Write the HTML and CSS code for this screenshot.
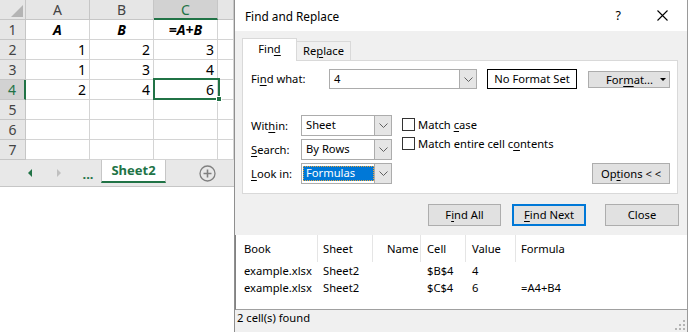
FILE: index.html
```html
<!DOCTYPE html>
<html>
<head>
<meta charset="utf-8">
<link rel="stylesheet" href="styles.css">
</head>
<body>
<div class="app">
  <div class="excel">
    <div class="grid">
      <div class="hd corner"><span class="tri"></span></div>
      <div class="hd">A</div>
      <div class="hd">B</div>
      <div class="hd selcol">C</div>
      <div class="hd"></div>

      <div class="hd">1</div><div class="cell ctr bi">A</div><div class="cell ctr bi">B</div><div class="cell ctr bi">=A+B</div><div class="cell"></div>
      <div class="hd">2</div><div class="cell num">1</div><div class="cell num">2</div><div class="cell num">3</div><div class="cell"></div>
      <div class="hd">3</div><div class="cell num">1</div><div class="cell num">3</div><div class="cell num">4</div><div class="cell"></div>
      <div class="hd selrow">4</div><div class="cell num">2</div><div class="cell num">4</div><div class="cell num">6</div><div class="cell"></div>
      <div class="hd">5</div><div class="cell"></div><div class="cell"></div><div class="cell"></div><div class="cell"></div>
      <div class="hd">6</div><div class="cell"></div><div class="cell"></div><div class="cell"></div><div class="cell"></div>
      <div class="hd">7</div><div class="cell"></div><div class="cell"></div><div class="cell"></div><div class="cell"></div>

      <div class="selbox"><span class="handle"></span></div>
    </div>
    <div class="tabbar">
      <span class="navl"></span>
      <span class="navr"></span>
      <span class="dots">...</span>
      <div class="stab">Sheet2</div>
      <svg class="plus" width="17" height="17" viewBox="0 0 17 17"><circle cx="8.5" cy="8.5" r="7.5" fill="none" stroke="#808080" stroke-width="1.3"/><path d="M8.5 4.5V12.5M4.5 8.5H12.5" stroke="#808080" stroke-width="1.6"/></svg>
    </div>
  </div>

  <div class="dlg">
    <div class="titlebar">
      <span class="ttl">Find and Replace</span>
      <span class="help">?</span>
      <svg class="xbtn" width="11" height="11" viewBox="0 0 11 11"><path d="M0.5 0.5L10.5 10.5M10.5 0.5L0.5 10.5" stroke="#000" stroke-width="1.1"/></svg>
    </div>
    <div class="tabs">
      <div class="tab active">Fin<u>d</u></div>
      <div class="tab">Re<u>p</u>lace</div>
    </div>
    <div class="panel">
      <div class="row1">
        <span class="lbl lw1">Fi<u>n</u>d what:</span>
        <div class="combo cwide">
          <span class="cval">4</span>
          <span class="dd"><svg width="9" height="5" viewBox="0 0 9 5"><path d="M0.5 0.5L4.5 4.5L8.5 0.5" fill="none" stroke="#606060"/></svg></span>
        </div>
        <div class="nfs">No Format Set</div>
        <div class="btn fmt"><span>For<u>m</u>at...</span><span class="caret"></span></div>
      </div>
      <div class="lower">
        <div class="fields">
          <div class="frow">
            <span class="lbl lw2">Wit<u>h</u>in:</span>
            <div class="combo csel"><span class="cval">Sheet</span><span class="dd"><svg width="9" height="5" viewBox="0 0 9 5"><path d="M0.5 0.5L4.5 4.5L8.5 0.5" fill="none" stroke="#606060"/></svg></span></div>
          </div>
          <div class="frow">
            <span class="lbl lw2"><u>S</u>earch:</span>
            <div class="combo csel"><span class="cval">By Rows</span><span class="dd"><svg width="9" height="5" viewBox="0 0 9 5"><path d="M0.5 0.5L4.5 4.5L8.5 0.5" fill="none" stroke="#606060"/></svg></span></div>
          </div>
          <div class="frow">
            <span class="lbl lw2"><u>L</u>ook in:</span>
            <div class="combo csel"><span class="cval hl">Formulas</span><span class="dd"><svg width="9" height="5" viewBox="0 0 9 5"><path d="M0.5 0.5L4.5 4.5L8.5 0.5" fill="none" stroke="#606060"/></svg></span></div>
          </div>
        </div>
        <div class="checks">
          <div class="chk"><span class="box"></span><span>Match <u>c</u>ase</span></div>
          <div class="chk"><span class="box"></span><span>Match entire cell c<u>o</u>ntents</span></div>
        </div>
        <div class="btn opts">Op<u>t</u>ions &lt; &lt;</div>
      </div>
    </div>
    <div class="actions">
      <div class="btn b-all">F<u>i</u>nd All</div>
      <div class="btn b-next"><span><u>F</u>ind Next</span></div>
      <div class="btn b-close">Close</div>
    </div>
    <div class="results">
      <div class="rgrid rhead">
        <div class="c1">Book</div><div class="c2">Sheet</div><div class="c3">Name</div><div class="c4">Cell</div><div class="c5">Value</div><div class="c6">Formula</div>
      </div>
      <div class="rgrid rrow">
        <div class="c1">example.xlsx</div><div class="c2">Sheet2</div><div class="c3"></div><div class="c4">$B$4</div><div class="c5">4</div><div class="c6"></div>
      </div>
      <div class="rgrid rrow">
        <div class="c1">example.xlsx</div><div class="c2">Sheet2</div><div class="c3"></div><div class="c4">$C$4</div><div class="c5">6</div><div class="c6">=A4+B4</div>
      </div>
    </div>
    <div class="status">
      <span class="stxt">2 cell(s) found</span>
      <svg class="grip" width="11" height="10" viewBox="0 0 11 10"><g fill="#b4b4b4"><rect x="8" y="0" width="2" height="2"/><rect x="4" y="4" width="2" height="2"/><rect x="8" y="4" width="2" height="2"/><rect x="0" y="8" width="2" height="2"/><rect x="4" y="8" width="2" height="2"/><rect x="8" y="8" width="2" height="2"/></g></svg>
    </div>
  </div>
</div>
</body>
</html>
```

FILE: styles.css
```css
* { box-sizing: border-box; margin: 0; padding: 0; }
html, body { width: 688px; height: 332px; overflow: hidden; background: #fff; }
body { font-family: "Noto Sans", "Open Sans", sans-serif; font-size: 11.2px; color: #000; }
u { text-decoration: underline; text-underline-offset: 2px; }

.app { display: flex; width: 688px; height: 332px; }

/* ---------- spreadsheet ---------- */
.excel { width: 234px; flex: none; display: flex; flex-direction: column; background: #fff; }
.grid {
  position: relative;
  display: grid;
  grid-template-columns: 26px 64px 64px 64px 16px;
  grid-auto-rows: 20px;
  font-family: "Noto Sans", sans-serif;
  font-size: 14px;
}
.hd, .cell {
  border-right: 1px solid #d4d4d4;
  border-bottom: 1px solid #d4d4d4;
  line-height: 19px;
  white-space: nowrap;
  overflow: hidden;
}
.hd { background: #e6e6e6; color: #444; text-align: center; border-color: #c6c6c6; }
.selcol { background: #d2d2d2; color: #217346; border-bottom: 2px solid #217346; }
.selrow { background: #d2d2d2; color: #217346; border-right: 2px solid #217346; }
.corner { display: flex; justify-content: flex-end; align-items: flex-end; padding: 0 2px 2px 0; }
.tri { width: 0; height: 0; border-left: 12px solid transparent; border-bottom: 12px solid #b4b4b4; }
.cell { color: #000; }
.ctr { text-align: center; }
.bi { font-weight: bold; font-style: italic; }
.num { text-align: right; padding-right: 3px; }
.selbox {
  position: absolute; left: 153px; top: 78px; width: 67px; height: 22px;
  border: 2px solid #217346;
}
.handle {
  position: absolute; right: -4px; bottom: -4px; width: 6px; height: 6px;
  background: #217346; border: 1px solid #fff;
}

.tabbar {
  height: 27px; background: #e8e8e8; border-bottom: 1px solid #c6c6c6;
  display: flex; align-items: center; padding-left: 28px;
}
.navl { width: 0; height: 0; border-right: 4px solid #217346; border-top: 4px solid transparent; border-bottom: 4px solid transparent; }
.navr { width: 0; height: 0; margin-left: 25px; border-left: 4px solid #c0c0c0; border-top: 4px solid transparent; border-bottom: 4px solid transparent; }
.dots { width: 16px; margin-left: 19px; text-align: center; color: #217346; font-weight: bold; font-size: 13px; line-height: 12px; padding-top: 2px; }
.stab {
  align-self: flex-start; margin-left: 5px; width: 65px; height: 23px;
  background: #fff; border-left: 1px solid #c6c6c6; border-right: 1px solid #c6c6c6;
  border-bottom: 2px solid #217346; color: #217346; font-weight: bold; font-size: 13px;
  text-align: center; line-height: 21px;
}
.plus { margin-left: 33px; }

/* ---------- dialog ---------- */
.dlg {
  width: 454px; height: 332px; flex: none; background: #f0f0f0;
  border-left: 1px solid #8f8f8f; border-right: 1px solid #9a9a9a;
  display: flex; flex-direction: column;
}
.titlebar { height: 31px; flex: none; background: #fff; display: flex; align-items: center; padding: 0 19px 0 10px; }
.ttl { font-size: 11.8px; line-height: 16px; }
.help { margin-left: auto; font-size: 12.5px; line-height: 16px; }
.xbtn { margin-left: 36px; }

.tabs { height: 22px; flex: none; margin-top: 7px; padding-left: 7px; display: flex; align-items: flex-end; position: relative; z-index: 1; }
.tab {
  width: 54px; height: 19px; background: #f0f0f0; border: 1px solid #d9d9d9; border-left: none; border-bottom: none;
  text-align: center; line-height: 18px;
}
.tab.active { width: 55px; height: 23px; margin-bottom: -1px; background: #fff; border-left: 1px solid #d9d9d9; line-height: 20px; }

.panel {
  margin-left: 7px; width: 436px; height: 134px; flex: none; background: #fff;
  border: 1px solid #d9d9d9; display: flex; flex-direction: column;
}
.row1 { margin-top: 8px; height: 20px; padding-left: 8px; display: flex; align-items: center; }
.lbl { line-height: 16px; white-space: nowrap; }
.lw1 { width: 78px; flex: none; }
.lw2 { width: 50px; flex: none; }
.combo {
  height: 20px; background: #fff; border: 1px solid #acacac; display: flex; align-items: stretch; flex: none;
}
.cwide { width: 148px; }
.csel { width: 91px; height: 21px; }
.cval { flex: 1; padding-left: 4px; line-height: 18px; white-space: nowrap; }
.dd { width: 17px; background: #e5e5e5; border-left: 1px solid #acacac; display: flex; align-items: center; justify-content: center; }
.hl { flex: none; width: 71px; margin: 2px 0 2px 1px; padding-left: 3px; background: #0078d7; color: #fff; line-height: 14px; outline: 1px dotted #e8a33a; outline-offset: -1px; }
.nfs { margin-left: 10px; width: 90px; height: 20px; border: 1px solid #000; text-align: center; line-height: 18px; flex: none; }
.btn { background: #e1e1e1; border: 1px solid #adadad; text-align: center; white-space: nowrap; flex: none; }
.fmt { margin-left: 11px; width: 82px; height: 17px; line-height: 15px; display: flex; align-items: center; padding-left: 17px; }
.caret { margin-left: auto; margin-right: 3px; width: 0; height: 0; border-top: 3px solid #000; border-left: 3px solid transparent; border-right: 3px solid transparent; }

.lower { margin-top: 26px; padding-left: 8px; display: flex; align-items: flex-start; }
.fields { display: flex; flex-direction: column; gap: 3px; }
.frow { display: flex; align-items: center; height: 21px; }
.checks { margin-left: 10px; display: flex; flex-direction: column; }
.chk { height: 19px; display: flex; align-items: center; white-space: nowrap; }
.chk .box { width: 13px; height: 13px; border: 1px solid #333; background: #fff; margin-right: 3px; flex: none; }
.opts { align-self: flex-end; margin-left: auto; margin-right: 7px; width: 78px; height: 21px; line-height: 19px; }

.actions { height: 22px; flex: none; margin-top: 10px; padding-right: 8px; display: flex; justify-content: flex-end; }
.actions .btn { line-height: 20px; }
.b-all { width: 73px; }
.b-next { width: 74px; margin-left: 11px; border: 2px solid #0078d7; line-height: 18px !important; }
.b-close { width: 74px; margin-left: 19px; }

.results {
  margin-top: 9px; height: 75px; flex: none; background: #fff;
  border-left: 1px solid #828282; border-bottom: 1px solid #a0a0a0;
}
.rgrid { display: grid; grid-template-columns: 82px 55px 48px 45px 50px 1fr; }
.rgrid > div { white-space: nowrap; overflow: hidden; border-right: 1px solid transparent; }
.rhead { height: 27px; }
.rhead > div { line-height: 27px; border-right-color: #e5e5e5; }
.rhead > div:last-child { border-right-color: transparent; }
.rrow { height: 17px; }
.rrow > div { line-height: 17px; }
.c1 { padding-left: 8px; }
.c2 { padding-left: 5px; }
.c3 { padding-left: 14px; }
.c4 { padding-left: 6px; }
.c5 { padding-left: 6px; }
.c6 { padding-left: 5px; }

.status { flex: 1; display: flex; align-items: flex-start; padding-left: 2px; }
.stxt { line-height: 16px; }
.grip { margin-left: auto; align-self: flex-end; margin-right: 1px; margin-bottom: 2px; }
```
